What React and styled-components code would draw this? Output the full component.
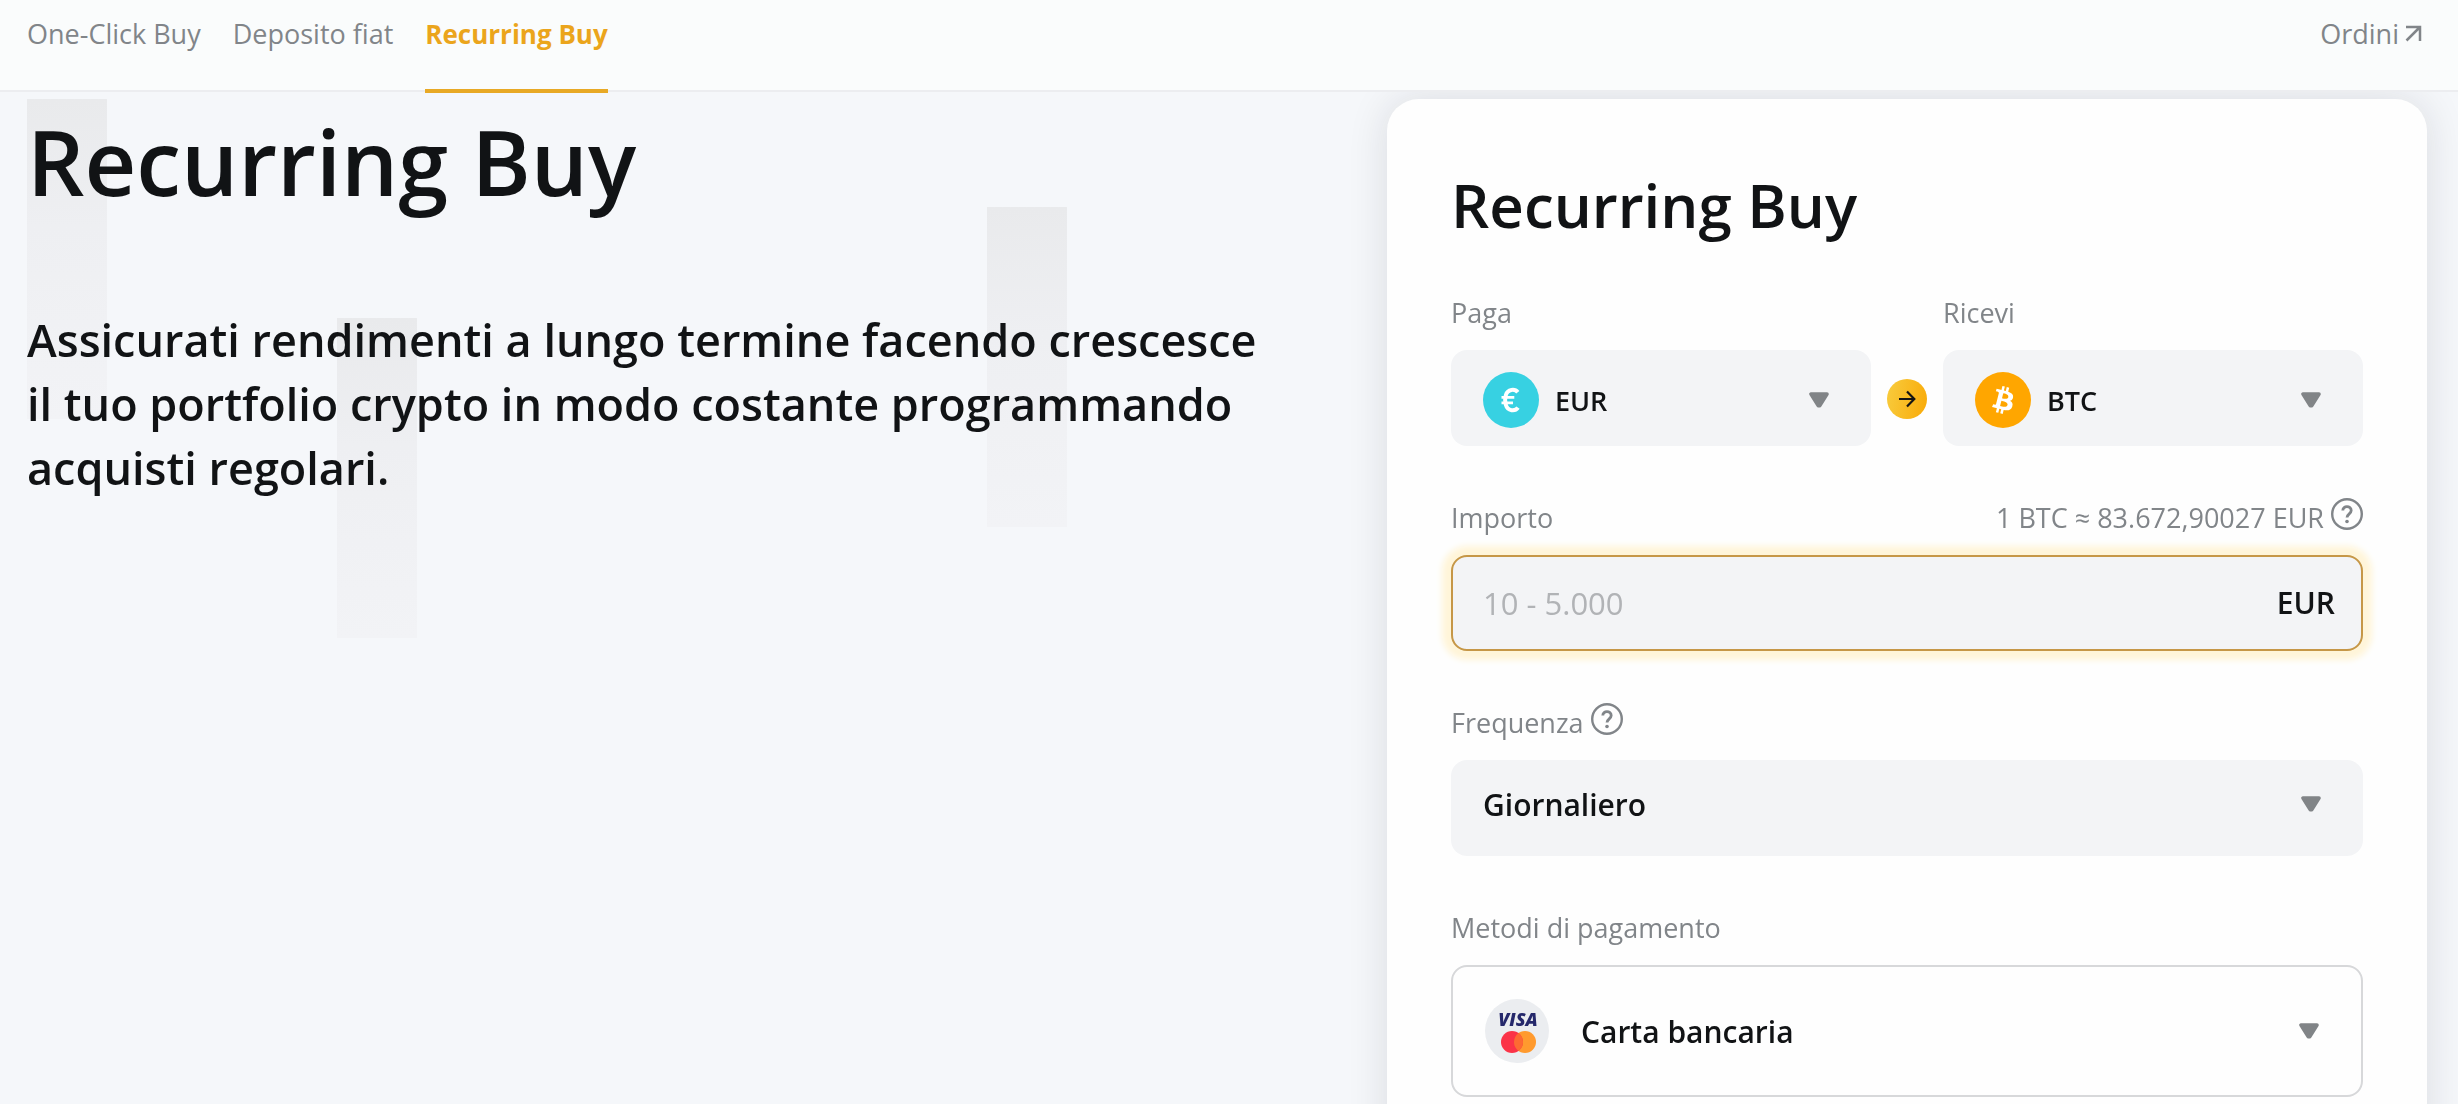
import React, { useState } from "react";
import styled, { createGlobalStyle } from "styled-components";

const GlobalStyle = createGlobalStyle`
  * {
    box-sizing: border-box;
  }

  body {
    margin: 0;
    background: #f5f7fa;
    color: #111315;
    font-family: "Open Sans", "Noto Sans", sans-serif;
  }

  h1, h2, p {
    margin: 0;
  }
`;

const Page = styled.div`
  height: 100vh;
  display: flex;
  flex-direction: column;
`;

const Header = styled.header`
  display: flex;
  justify-content: space-between;
  flex: none;
  height: 92px;
  padding: 0 36px 0 27px;
  background: #fafcfc;
  border-bottom: 2px solid #ecedf0;
`;

const Tabs = styled.nav`
  display: flex;
  gap: 32px;
`;

const Tab = styled.a`
  height: 93px;
  padding-top: 14px;
  font-size: ${({ $active }) => ($active ? 26 : 27)}px;
  line-height: 40px;
  text-decoration: none;
  white-space: nowrap;
  color: ${({ $active }) => ($active ? "#eba51c" : "#818589")};
  font-weight: ${({ $active }) => ($active ? 700 : 400)};
  border-bottom: 4px solid ${({ $active }) => ($active ? "#e8a925" : "transparent")};
`;

const OrdersLink = styled(Tab)`
  display: flex;
  gap: 5px;

  svg {
    margin-top: 11px;
  }
`;

const Main = styled.main`
  flex: 1;
  display: grid;
  grid-template-columns: 17fr 13fr;
  align-items: start;
  padding: 7px 31px 64px 27px;
  overflow-y: auto;
  scrollbar-width: none;
`;

const Hero = styled.section`
  position: relative;
  padding: 10px 128px 0 0;
`;

// faded candle behind the hero text
const Candle = styled.span`
  position: absolute;
  z-index: -1;
  top: ${({ $top }) => $top}px;
  left: ${({ $left }) => $left}%;
  width: 80px;
  height: 320px;
  background: linear-gradient(#e9eaec, #eeeff2 40%, #f2f3f6);
`;

const HeroTitle = styled.h1`
  font-size: 90px;
  line-height: 104px;
  font-weight: 600;
`;

const HeroText = styled.p`
  margin-top: 95px;
  font-size: 45px;
  line-height: 64px;
  font-weight: 600;
`;

const Card = styled.section`
  padding: 62px 64px 64px;
  background: #fefefe;
  border-radius: 32px;
  box-shadow: 0 0 40px rgba(24, 26, 40, 0.12);
`;

const CardTitle = styled.h2`
  font-size: 60px;
  line-height: 88px;
  font-weight: 600;
`;

const PairRow = styled.div`
  display: grid;
  grid-template-columns: 1fr 72px 1fr;
  align-items: end;
  margin-top: 44px;
`;

const Field = styled.div`
  margin-top: ${({ $top }) => $top || 0}px;
`;

const FieldHead = styled.div`
  display: flex;
  justify-content: space-between;
  height: 40px;
  margin-bottom: 17px;
  color: #818589;
  font-size: 27px;
  line-height: 40px;
`;

const LabelGroup = styled.div`
  display: flex;
  gap: 7px;
`;

const HelpButton = styled.button`
  width: 32px;
  height: 32px;
  padding: 0;
  border: 0;
  background: none;
  color: #818589;
  cursor: pointer;

  svg {
    display: block;
  }
`;

// icon, select and caret all share one grid cell
const SelectBox = styled.div`
  display: grid;
  align-items: center;
  height: ${({ $outlined }) => ($outlined ? 132 : 96)}px;
  padding: ${({ $pad }) => $pad || "0"};
  border-radius: 16px;
  background: ${({ $outlined }) => ($outlined ? "#fefefe" : "#f3f4f6")};
  border: ${({ $outlined }) => ($outlined ? "2px solid #d7d8da" : "0")};

  > * {
    grid-area: 1 / 1;
  }

  > svg {
    margin-left: 32px;
    pointer-events: none;
  }

  > svg:last-child {
    justify-self: end;
    margin-right: 42px;
  }
`;

const Select = styled.select`
  width: 100%;
  height: 100%;
  padding: 0 80px 0 ${({ $indent }) => $indent || 32}px;
  border: 0;
  border-radius: 16px;
  outline: none;
  appearance: none;
  background: none;
  color: #111315;
  font-family: inherit;
  font-size: ${({ $size }) => $size || 30}px;
  font-weight: 600;
  cursor: pointer;
`;

const ArrowCell = styled.div`
  display: flex;
  justify-content: center;
  padding-bottom: 27px;
`;

const ArrowBadge = styled.span`
  display: flex;
  align-items: center;
  justify-content: center;
  width: 40px;
  height: 40px;
  border-radius: 50%;
  background: linear-gradient(100deg, #f8cc3e, #f9aa08);
`;

const AmountBox = styled.div`
  display: flex;
  align-items: center;
  height: 96px;
  padding: 0 26px 0 30px;
  border: 2px solid #c69747;
  border-radius: 16px;
  background: #f3f4f6;
  box-shadow: 0 0 6px 9px #fff5d9;
`;

const AmountInput = styled.input`
  flex: 1;
  min-width: 0;
  padding: 0;
  border: 0;
  outline: none;
  background: none;
  color: #111315;
  font-family: inherit;
  font-size: 31px;
  line-height: 44px;

  &::placeholder {
    color: #b1b3b6;
    opacity: 1;
  }
`;

const Currency = styled.span`
  font-size: 30px;
  line-height: 44px;
  font-weight: 600;
`;

const ExternalIcon = () => (
  <svg width="18" height="18" viewBox="0 0 18 18" fill="none" stroke="#818589" strokeWidth="2.5" aria-hidden="true">
    <path d="M2 2h14v14M16 2 2.5 15.5" />
  </svg>
);

const CaretIcon = () => (
  <svg width="20" height="16" viewBox="0 0 20 16" aria-hidden="true">
    <path
      d="M2 2h16L10.800 13.600h-1.600z"
      fill="#818487"
      stroke="#818487"
      strokeWidth="3.600"
      strokeLinejoin="round"
    />
  </svg>
);

const HelpIcon = () => (
  <svg width="32" height="32" viewBox="0 0 32 32" fill="none" stroke="currentColor" aria-hidden="true">
    <circle cx="16" cy="16" r="14.8" strokeWidth="2.4" />
    <path d="M11.8 12.6c0-5.4 8.4-5.2 8.4 0 0 3.2-4.2 3.3-4.2 7" strokeWidth="2.8" />
    <circle cx="16" cy="23.5" r="1.8" fill="currentColor" stroke="none" />
  </svg>
);

const EuroIcon = () => (
  <svg width="56" height="56" viewBox="0 0 56 56" fill="none" stroke="#fff" strokeWidth="4" aria-hidden="true">
    <circle cx="28" cy="28" r="28" fill="#37d1e2" stroke="none" />
    <path d="M34.8 20.2C32 16.6 24.6 16.8 22.8 23.2q-1.4 4.8 0 9.600C24.6 39.400 32.2 39.600 35 35.600" />
    <path d="M18.5 25.4h12.8M18.500 30.800h11.500" strokeWidth="2.8" />
  </svg>
);

const BitcoinIcon = () => (
  <svg width="56" height="56" viewBox="-4 -4 40 40" aria-hidden="true">
    <circle cx="16" cy="16" r="20" fill="#ffa600" />
    <path
      fill="#fff"
      d="M23.189 14.02c.314-2.096-1.283-3.223-3.465-3.975l.708-2.84-1.728-.43-.69 2.765c-.454-.114-.92-.22-1.385-.326l.695-2.783L15.596 6l-.708 2.839c-.376-.086-.746-.17-1.104-.26l.002-.009-2.384-.595-.46 1.846s1.283.294 1.256.312c.7.175.826.638.805 1.006l-.806 3.235c.048.012.11.03.18.057l-.183-.045-1.13 4.532c-.086.212-.303.531-.793.41.018.025-1.256-.313-1.256-.313l-.858 1.978 2.25.561c.418.105.828.215 1.231.318l-.715 2.872 1.727.43.708-2.84c.472.127.93.245 1.378.357l-.706 2.828 1.728.43.715-2.866c2.948.558 5.164.333 6.097-2.333.752-2.146-.037-3.385-1.588-4.192 1.13-.26 1.98-1.003 2.207-2.538zm-3.95 5.538c-.533 2.147-4.148.986-5.32.695l.95-3.805c1.172.293 4.929.872 4.37 3.11zm.535-5.569c-.487 1.953-3.495.96-4.47.717l.86-3.45c.975.243 4.118.696 3.61 2.733z"
    />
  </svg>
);

const CardBrandsIcon = () => (
  <svg width="64" height="64" viewBox="0 0 64 64" aria-hidden="true">
    <circle cx="32" cy="32" r="32" fill="#ebedf0" />
    <text
      x="33"
      y="27"
      textAnchor="middle"
      fontFamily="Open Sans, sans-serif"
      fontSize="18"
      fontWeight="800"
      fontStyle="italic"
      fill="#25286b"
    >
      VISA
    </text>
    <circle cx="40" cy="43" r="11" fill="#ff9a2e" />
    <circle cx="27" cy="43" r="11" fill="#fb3348" />
    <path d="M33.5 34.1a11 11 0 0 1 0 17.8 11 11 0 0 1 0-17.8z" fill="#fd6a32" />
  </svg>
);

const RightArrowIcon = () => (
  <svg width="18" height="18" viewBox="0 0 18 18" fill="none" stroke="#141414" strokeWidth="2.2" aria-hidden="true">
    <path d="M1 9h15M9 1.5 16.3 9 9 16.5" />
  </svg>
);

const tabs = [
  { id: "one-click", label: "One-Click Buy" },
  { id: "fiat", label: "Deposito fiat" },
  { id: "recurring", label: "Recurring Buy" },
];

const candles = [
  { top: 0, left: 0 },
  { top: 219, left: 22.8 },
  { top: 108, left: 70.6 },
];

const RecurringBuyForm = () => {
  const [amount, setAmount] = useState("");

  return (
    <Card>
      <CardTitle>Recurring Buy</CardTitle>

      <PairRow>
        <Field>
          <FieldHead>
            <label htmlFor="pay">Paga</label>
          </FieldHead>
          <SelectBox $pad="4px 0 0">
            <EuroIcon />
            <Select id="pay" $indent={104} $size={27}>
              <option>EUR</option>
            </Select>
            <CaretIcon />
          </SelectBox>
        </Field>
        <ArrowCell>
          <ArrowBadge>
            <RightArrowIcon />
          </ArrowBadge>
        </ArrowCell>
        <Field>
          <FieldHead>
            <label htmlFor="receive">Ricevi</label>
          </FieldHead>
          <SelectBox $pad="4px 0 0">
            <BitcoinIcon />
            <Select id="receive" $indent={104} $size={27}>
              <option>BTC</option>
            </Select>
            <CaretIcon />
          </SelectBox>
        </Field>
      </PairRow>

      <Field $top={52}>
        <FieldHead>
          <label htmlFor="amount">Importo</label>
          <LabelGroup>
            <span>1 BTC ≈ 83.672,90027 EUR</span>
            <HelpButton type="button" aria-label="Info">
              <HelpIcon />
            </HelpButton>
          </LabelGroup>
        </FieldHead>
        <AmountBox>
          <AmountInput
            id="amount"
            placeholder="10 - 5.000"
            inputMode="decimal"
            value={amount}
            onChange={(e) => setAmount(e.target.value)}
          />
          <Currency>EUR</Currency>
        </AmountBox>
      </Field>

      <Field $top={52}>
        <FieldHead>
          <LabelGroup>
            <label htmlFor="frequency">Frequenza</label>
            <HelpButton type="button" aria-label="Info">
              <HelpIcon />
            </HelpButton>
          </LabelGroup>
        </FieldHead>
        <SelectBox $pad="0 0 8px">
          <Select id="frequency">
            <option>Giornaliero</option>
          </Select>
          <CaretIcon />
        </SelectBox>
      </Field>

      <Field $top={52}>
        <FieldHead>
          <label htmlFor="method">Metodi di pagamento</label>
        </FieldHead>
        <SelectBox $outlined>
          <CardBrandsIcon />
          <Select id="method" $indent={128}>
            <option>Carta bancaria</option>
          </Select>
          <CaretIcon />
        </SelectBox>
      </Field>
    </Card>
  );
};

const App = () => {
  const [activeTab, setActiveTab] = useState("recurring");

  return (
    <Page>
      <GlobalStyle />
      <Header>
        <Tabs>
          {tabs.map((tab) => (
            <Tab
              key={tab.id}
              href={`#${tab.id}`}
              $active={activeTab === tab.id}
              onClick={() => setActiveTab(tab.id)}
            >
              {tab.label}
            </Tab>
          ))}
        </Tabs>
        <OrdersLink href="#orders">
          Ordini
          <ExternalIcon />
        </OrdersLink>
      </Header>

      <Main>
        <Hero>
          {candles.map((candle) => (
            <Candle key={candle.left} $top={candle.top} $left={candle.left} />
          ))}
          <HeroTitle>Recurring Buy</HeroTitle>
          <HeroText>
            Assicurati rendimenti a lungo termine facendo crescesce il tuo
            portfolio crypto in modo costante programmando acquisti regolari.
          </HeroText>
        </Hero>
        <RecurringBuyForm />
      </Main>
    </Page>
  );
};

export default App;
